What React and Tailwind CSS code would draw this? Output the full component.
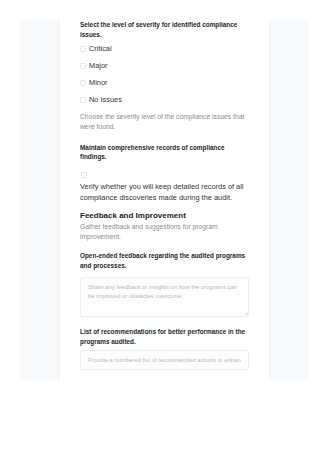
import { useState } from 'react';

const SEVERITIES = ["Critical", "Major", "Minor", "No Issues"];

function Box({ checked, onChange }) {
  return (
    <input
      type="checkbox"
      checked={checked}
      onChange={onChange}
      className="appearance-none w-[6px] h-[6px] border-[0.5px] border-[#e3e3e3] rounded-[1.5px] bg-white shrink-0 checked:bg-[#3b82f6]"
    />
  );
}

export default function App() {
  const [severity, setSeverity] = useState({});
  const [keepRecords, setKeepRecords] = useState(false);

  return (
    <div className="min-h-[453px] bg-white font-['Liberation_Sans',Arial,sans-serif]">
      <div className="pt-[20px] pl-[20px] pr-[11px]">
        <div className="h-[360px] bg-[#f9fafb] flex justify-center overflow-hidden">
          <div className="w-[209px] bg-white shadow-[0_0_6px_rgba(0,0,0,0.07)] px-[20px] flex flex-col">

            {/* Severity */}
            <p className="text-[6.4px] leading-[9.6px] font-bold text-[#262626]">
              Select the level of severity for identified compliance issues.
            </p>
            <div className="flex flex-col gap-[6px] mt-[4px]">
              {SEVERITIES.map(s => (
                <label key={s} className="flex items-center gap-[3px] text-[7.4px] leading-[11px] text-[#333]">
                  <Box
                    checked={!!severity[s]}
                    onChange={() => setSeverity({ ...severity, [s]: !severity[s] })}
                  />
                  {s}
                </label>
              ))}
            </div>
            <p className="text-[6.75px] leading-[10px] text-[#8c8c8c] mt-[6.5px]">
              Choose the severity level of the compliance issues that were found.
            </p>

            {/* Records */}
            <p className="text-[6.4px] leading-[9.6px] font-bold text-[#262626] mt-[11px]">
              Maintain comprehensive records of compliance findings.
            </p>
            <div className="mt-[10.3px] flex pl-[0.5px]">
              <Box checked={keepRecords} onChange={() => setKeepRecords(!keepRecords)} />
            </div>
            <p className="text-[7.4px] leading-[11px] text-[#333] mt-[3px]">
              Verify whether you will keep detailed records of all compliance discoveries made during the audit.
            </p>

            {/* Feedback section */}
            <h2 className="text-[8px] leading-[12px] font-bold text-[#222] mt-[6.5px]">
              Feedback and Improvement
            </h2>
            <p className="text-[6.75px] leading-[10px] text-[#8c8c8c]">
              Gather feedback and suggestions for program improvement.
            </p>

            <p className="text-[6.4px] leading-[10px] font-bold text-[#262626] mt-[9px]">
              Open-ended feedback regarding the audited programs and processes.
            </p>
            <div className="relative mt-[6px]">
              <textarea
                className="block h-[40px] w-full resize-none border-[0.5px] border-[#ededed] rounded-[2px] bg-[#fdfdfd] px-[7px] py-[5px] text-[5.9px] leading-[9.6px] text-[#333] placeholder:text-[#b8b8b8] outline-none"
                placeholder="Share any feedback or insights on how the programs can be improved or obstacles overcome."
              />
              <svg className="absolute right-[1.5px] bottom-[1.5px] w-[3.5px] h-[3.5px]" viewBox="0 0 4 4">
                <path d="M4 0.5 L0.5 4 M4 2.3 L2.3 4" stroke="#9a9a9a" strokeWidth="0.5" />
              </svg>
            </div>

            <p className="text-[6.4px] leading-[10px] font-bold text-[#262626] mt-[10px]">
              List of recommendations for better performance in the programs audited.
            </p>
            <input
              className="mt-[3.3px] h-[20.5px] w-full border-[0.5px] border-[#ededed] rounded-[2px] bg-[#fdfdfd] px-[7px] text-[5.9px] text-[#333] placeholder:text-[#b8b8b8] outline-none shrink-0"
              placeholder="Provide a numbered list of recommended actions to enhance performance."
            />
          </div>
        </div>
      </div>
    </div>
  );
}
